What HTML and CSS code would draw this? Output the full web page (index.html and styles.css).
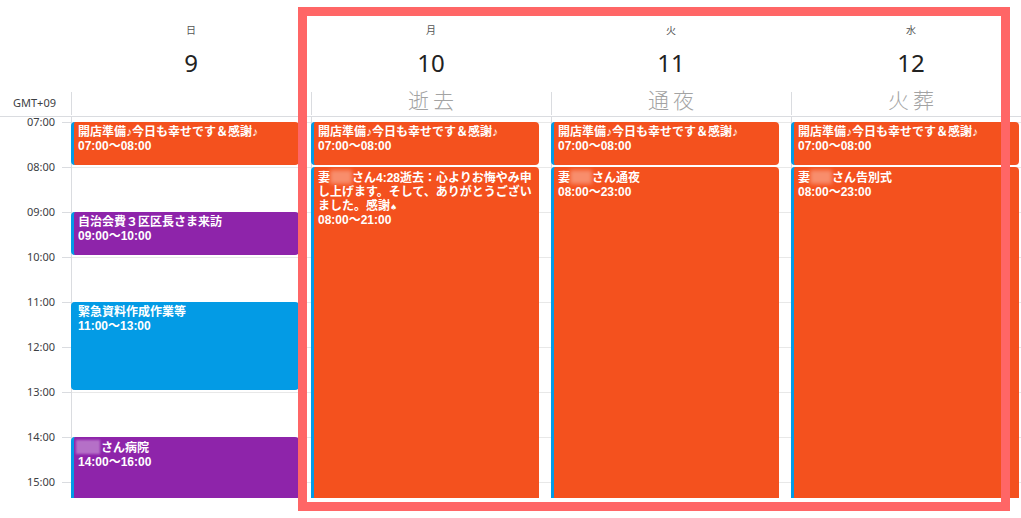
FILE: index.html
```html
<!DOCTYPE html>
<html lang="ja">

<head>
    <meta charset="UTF-8">
    <meta name="viewport" content="width=device-width, initial-scale=1.0">
    <link rel="stylesheet" href="styles.css">
    <title>カレンダー</title>
</head>

<body>
    <div class="cal">
        <div class="head">
            <div class="gutter"><span class="tz">GMT+09</span></div>
            <div class="day-head">
                <div class="dow">日</div>
                <div class="date">9</div>
                <div class="note"></div>
            </div>
            <div class="day-head">
                <div class="dow">月</div>
                <div class="date">10</div>
                <div class="note">逝去</div>
            </div>
            <div class="day-head">
                <div class="dow">火</div>
                <div class="date">11</div>
                <div class="note">通夜</div>
            </div>
            <div class="day-head">
                <div class="dow">水</div>
                <div class="date">12</div>
                <div class="note">火葬</div>
            </div>
        </div>

        <div class="body">
            <div class="times">
                <div class="hour"><span>07:00</span><i class="tick"></i></div>
                <div class="hour"><span>08:00</span><i class="tick"></i></div>
                <div class="hour"><span>09:00</span><i class="tick"></i></div>
                <div class="hour"><span>10:00</span><i class="tick"></i></div>
                <div class="hour"><span>11:00</span><i class="tick"></i></div>
                <div class="hour"><span>12:00</span><i class="tick"></i></div>
                <div class="hour"><span>13:00</span><i class="tick"></i></div>
                <div class="hour"><span>14:00</span><i class="tick"></i></div>
                <div class="hour"><span>15:00</span><i class="tick"></i></div>
            </div>

            <div class="day">
                <div class="event orange" style="grid-row: 1 / span 1">
                    <div class="title">開店準備♪今日も幸せです＆感謝♪</div>
                    <div class="time">07:00～08:00</div>
                </div>
                <div class="event purple" style="grid-row: 3 / span 1">
                    <div class="title">自治会費３区区長さま来訪</div>
                    <div class="time">09:00～10:00</div>
                </div>
                <div class="event blue" style="grid-row: 5 / span 2">
                    <div class="title">緊急資料作成作業等</div>
                    <div class="time">11:00～13:00</div>
                </div>
                <div class="event purple" style="grid-row: 8 / span 2">
                    <div class="title"><span class="hidden wide"></span>さん病院</div>
                    <div class="time">14:00～16:00</div>
                </div>
            </div>

            <div class="day">
                <div class="event orange" style="grid-row: 1 / span 1">
                    <div class="title">開店準備♪今日も幸せです＆感謝♪</div>
                    <div class="time">07:00～08:00</div>
                </div>
                <div class="event orange" style="grid-row: 2 / span 13">
                    <div class="title">妻<span class="hidden"></span>さん4:28逝去：心よりお悔やみ申し上げます。そして、ありがとうございました。感謝<small>♠</small></div>
                    <div class="time">08:00～21:00</div>
                </div>
            </div>

            <div class="day">
                <div class="event orange" style="grid-row: 1 / span 1">
                    <div class="title">開店準備♪今日も幸せです＆感謝♪</div>
                    <div class="time">07:00～08:00</div>
                </div>
                <div class="event orange" style="grid-row: 2 / span 15">
                    <div class="title">妻<span class="hidden"></span>さん通夜</div>
                    <div class="time">08:00～23:00</div>
                </div>
            </div>

            <div class="day">
                <div class="event orange" style="grid-row: 1 / span 1">
                    <div class="title">開店準備♪今日も幸せです＆感謝♪</div>
                    <div class="time">07:00～08:00</div>
                </div>
                <div class="event orange" style="grid-row: 2 / span 15">
                    <div class="title">妻<span class="hidden"></span>さん告別式</div>
                    <div class="time">08:00～23:00</div>
                </div>
            </div>
        </div>
    </div>

    <div class="highlight"></div>
</body>

</html>
```

FILE: styles.css
```css
* {
    margin: 0;
    padding: 0;
    box-sizing: border-box;
}

body {
    background: #fff;
    font-family: "Noto Sans", "Noto Sans CJK JP", sans-serif;
    color: #3c4043;
    width: 1021px;
    height: 518px;
    overflow: hidden;
    position: relative;
}

.cal {
    width: 1021px;
    height: 498px;
    overflow: hidden;
}

/* header */

.head {
    display: grid;
    grid-template-columns: 71px repeat(4, 240px);
    height: 117px;
    border-bottom: 1px solid #dadce0;
}

.gutter {
    display: flex;
    align-items: flex-end;
    justify-content: flex-end;
    padding: 0 15px 6px 0;
}

.tz {
    font-size: 11px;
    line-height: 14px;
    color: #3c4043;
}

.day-head {
    display: flex;
    flex-direction: column;
    align-items: center;
}

.dow {
    margin-top: 23px;
    font-family: "Noto Sans CJK JP", sans-serif;
    font-size: 10px;
    line-height: 14px;
    color: #555;
}

.date {
    margin-top: 11px;
    font-size: 24px;
    line-height: 30px;
    color: #222;
}

.note {
    align-self: stretch;
    position: relative;
    margin-top: 5px;
    height: 32px;
    text-align: center;
    font-family: "Noto Sans CJK JP", sans-serif;
    font-weight: 300;
    font-size: 21px;
    line-height: 32px;
    letter-spacing: 4px;
    padding-left: 4px;
    color: #a3a3a3;
}

.note::before {
    content: "";
    position: absolute;
    left: 0;
    bottom: 0;
    height: 23px;
    border-left: 1px solid #dadce0;
}

/* grid body */

.body {
    display: grid;
    grid-template-columns: 71px repeat(4, 240px);
}

.times {
    padding-top: 5px;
}

.hour {
    display: flex;
    justify-content: flex-end;
    height: 45px;
}

.hour span {
    margin: -7px 7px 0 0;
    font-size: 11px;
    line-height: 14px;
    color: #3c4043;
}

.tick {
    width: 9px;
    height: 0;
    border-top: 1px solid #dadce0;
}

.day {
    display: grid;
    grid-template-rows: repeat(17, 45px);
    padding: 5px 12px 0 0;
    border-left: 1px solid #dadce0;
    background-image: linear-gradient(to bottom, #e8e8e8 1px, transparent 1px);
    background-size: 100% 45px;
    background-position: 0 5px;
}

/* events */

.event {
    margin: 0 0 2px -1px;
    padding: 3px 3px 2px 4px;
    border-left: 3px solid #039be5;
    border-radius: 4px;
    color: #fff;
    font-family: "Liberation Sans", "Noto Sans CJK JP", sans-serif;
    font-size: 12px;
    font-weight: 700;
    line-height: 14px;
    overflow: hidden;
}

.orange {
    background-color: #f4511e;
}

.purple {
    background-color: #8e24aa;
}

.blue {
    background-color: #039be5;
}

.title small {
    font-family: "DejaVu Sans", sans-serif;
    font-size: 8px;
    line-height: 0;
}

.hidden {
    display: inline-block;
    width: 22px;
    height: 14px;
    vertical-align: -2px;
    background: rgba(255, 255, 255, 0.35);
    filter: blur(2px);
}

.hidden.wide {
    width: 24px;
    margin: 0 1px 0 -2px;
    filter: blur(1px);
}

/* highlight box drawn over the last three days */

.highlight {
    position: absolute;
    left: 298px;
    top: 7px;
    width: 712px;
    height: 504px;
    border: 9px solid #ff6666;
}
```
